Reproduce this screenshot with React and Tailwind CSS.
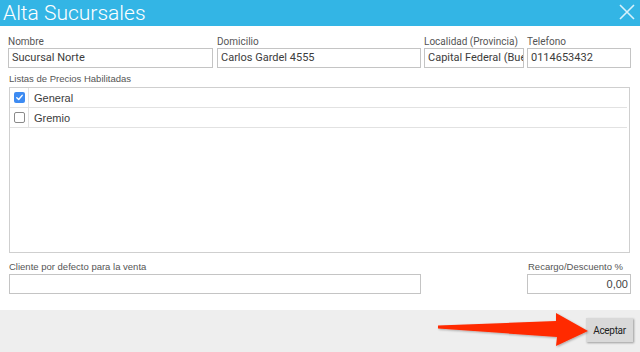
import React from "react";

const roboto = { fontFamily: "Roboto, 'Liberation Sans', sans-serif" };
const arial = { fontFamily: "'Liberation Sans', Arial, sans-serif" };

function Field({ label, value, w, className = "" }) {
  return (
    <div className={`flex flex-col ${className}`} style={{ width: w }}>
      <div className="text-[10px] leading-[12px] h-[12px] text-[#555] whitespace-nowrap" style={roboto}>{label}</div>
      <div className="h-[20px] border border-[#c4c4c4] bg-white px-[3px] text-[11px] leading-[18px] text-[#3c3c3c] overflow-hidden whitespace-nowrap" style={roboto}>
        {value}
      </div>
    </div>
  );
}

function Check({ checked }) {
  if (checked) {
    return (
      <div className="w-[11px] h-[11px] rounded-[2px] bg-[#3d8bf2] flex items-center justify-center">
        <svg width="9" height="9" viewBox="0 0 10 10">
          <path d="M2 5.3 L4.1 7.3 L8 2.6" fill="none" stroke="white" strokeWidth="1.6" strokeLinecap="round" strokeLinejoin="round" />
        </svg>
      </div>
    );
  }
  return <div className="w-[11px] h-[11px] rounded-[2px] border border-[#8a8a8a] bg-white" />;
}

function Row({ checked, label }) {
  return (
    <div className="flex h-[20px] border-b border-[#e2e2e2] mr-[2px]">
      <div className="w-[19px] flex items-center justify-center border-r border-[#e2e2e2] pl-[1px]">
        <Check checked={checked} />
      </div>
      <div className="pl-[5px] text-[11px] leading-[20px] text-[#3c3c3c]" style={arial}>{label}</div>
    </div>
  );
}

export default function App() {
  return (
    <div className="w-[640px] h-[352px] bg-white relative overflow-hidden">
      <div className="h-[26px] bg-[#33b5e5] flex items-center justify-between pl-[3px] pr-[5px]">
        <div className="text-[21px] leading-[26px] font-light text-white" style={roboto}>Alta Sucursales</div>
        <svg width="16" height="16" viewBox="0 0 16 16" className="mt-[-2px]">
          <path d="M1 1 L15 15 M15 1 L1 15" stroke="#d8f1fb" strokeWidth="1.6" />
        </svg>
      </div>

      <div className="pt-[10px] pl-[8px]">
        <div className="flex">
          <Field label="Nombre" value="Sucursal Norte" w={205} />
          <Field label="Domicilio" value="Carlos Gardel 4555" w={204} className="ml-[4px]" />
          <Field label="Localidad (Provincia)" value="Capital Federal (Buenos Aires)" w={100} className="ml-[3px]" />
          <Field label="Telefono" value="0114653432" w={104} className="ml-[3px]" />
        </div>

        <div className="mt-[5px] ml-[1px] text-[9.5px] leading-[12px] text-[#555]" style={arial}>Listas de Precios Habilitadas</div>
        <div className="mt-[2px] ml-[1px] w-[621px] h-[166px] border border-[#cfcfcf] bg-white">
          <Row checked label="General" />
          <Row label="Gremio" />
        </div>

        <div className="flex items-end mt-[8px] ml-[1px]">
          <div className="flex flex-col w-[412px]">
            <div className="text-[9.5px] leading-[12px] text-[#555]" style={arial}>Cliente por defecto para la venta</div>
            <div className="mt-[1px] h-[20px] border border-[#c4c4c4] bg-white" />
          </div>
          <div className="flex flex-col w-[104px] ml-[106px]">
            <div className="text-[9.5px] leading-[12px] text-[#555] whitespace-nowrap pl-[1px]" style={arial}>Recargo/Descuento %</div>
            <div className="mt-[1px] h-[20px] border border-[#c4c4c4] bg-white text-right pr-[2px] text-[11px] leading-[18px] text-[#444]" style={arial}>0,00</div>
          </div>
        </div>
      </div>

      <div className="absolute left-0 right-0 bottom-0 h-[42px] bg-[#eeeeee] flex justify-end items-start pt-[8px] pr-[7px]">
        <div className="w-[47px] h-[24px] bg-[#d9d9d9] shadow-[1px_1px_2px_rgba(0,0,0,0.35)] flex items-center justify-center text-[10px] text-[#222] tracking-[-0.3px]" style={roboto}>
          Aceptar
        </div>
      </div>

      <svg className="absolute left-0 top-0 pointer-events-none" width="640" height="352" viewBox="0 0 640 352">
        <defs>
          <filter id="sh" x="-10%" y="-50%" width="120%" height="200%">
            <feDropShadow dx="1" dy="1" stdDeviation="1" floodColor="#000" floodOpacity="0.3" />
          </filter>
        </defs>
        <polygon
          points="438,325.5 556,321 556,313 588,331 556,346 557,337 438,328.5"
          fill="#ff2a00"
          filter="url(#sh)"
        />
      </svg>
    </div>
  );
}
